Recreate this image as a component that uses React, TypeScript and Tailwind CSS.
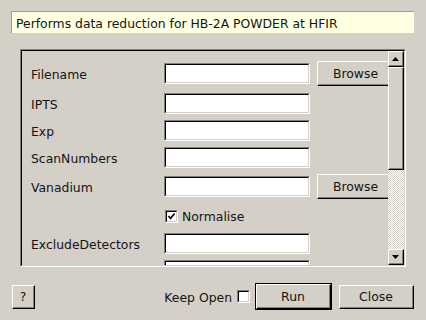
import React from "react";

const Sunken = ({ className = "", children }: { className?: string; children?: React.ReactNode }) => (
  <div className={`border-t border-l border-[#808080] border-b border-r border-b-white border-r-white ${className}`}>
    <div className="w-full h-full border-t border-l border-black border-b border-r border-b-[#d4d0c8] border-r-[#d4d0c8] bg-white">
      {children}
    </div>
  </div>
);

const Raised = ({
  className = "",
  children,
  noRight = false,
}: {
  className?: string;
  children?: React.ReactNode;
  noRight?: boolean;
}) => (
  <div
    className={`border-t border-l border-white border-b border-b-black ${noRight ? "" : "border-r border-r-black"} bg-[#d4d0c8] ${className}`}
  >
    <div
      className={`w-full h-full flex items-center justify-center border-b border-b-[#808080] ${noRight ? "" : "border-r border-r-[#808080]"}`}
    >
      {children}
    </div>
  </div>
);

const Check = ({ checked }: { checked?: boolean }) => (
  <Sunken className="w-[13px] h-[13px] shrink-0">
    {checked && (
      <svg width="9" height="9" viewBox="0 0 9 9" className="block">
        <path d="M1.5 4 L3.5 6.5 L7.5 1.5" stroke="black" strokeWidth="1.6" fill="none" />
      </svg>
    )}
  </Sunken>
);

const Arrow = ({ up }: { up?: boolean }) => (
  <Raised className="w-[16px] h-[16px] shrink-0">
    <svg width="7" height="4" viewBox="0 0 7 4" className="block">
      {up ? <path d="M3.5 0 L7 4 L0 4 Z" fill="black" /> : <path d="M0 0 L7 0 L3.5 4 Z" fill="black" />}
    </svg>
  </Raised>
);

const fields: { label: string; browse?: boolean; check?: boolean }[] = [
  { label: "Filename", browse: true },
  { label: "IPTS" },
  { label: "Exp" },
  { label: "ScanNumbers" },
  { label: "Vanadium", browse: true },
  { label: "", check: true },
  { label: "ExcludeDetectors" },
  { label: "" },
];

export default function App() {
  return (
    <div
      className="w-[426px] h-[320px] bg-[#d4d0c8] text-[#141414] text-[12.4px] leading-[15px] pl-[11px] pr-[12px] pt-[11px] overflow-hidden"
      style={{ fontFamily: '"DejaVu Sans", sans-serif' }}
    >
      <div className="h-[22px] w-[403px] bg-[#ffffe1] border-t border-l border-[#a09c94] flex items-center pl-[4px] pt-px">
        Performs data reduction for HB-2A POWDER at HFIR
      </div>

      <div className="mt-[16px] ml-[9px] w-[386px] h-[218px] border-t border-l border-[#808080] border-b border-r border-b-white border-r-white">
        <div className="w-full h-full border-t border-l border-black border-b border-r border-b-[#d4d0c8] border-r-[#d4d0c8] flex">
          <div className="flex-1 overflow-hidden pt-[10px] pl-[9px]">
            <div className="flex flex-col gap-[7px] w-[400px]">
              {fields.map((f, i) => (
                <div key={i} className={`flex items-center ${f.browse ? "h-[25px]" : "h-[20px]"}`}>
                  <div className="w-[133px] shrink-0 pt-[2px]">{f.label}</div>
                  {f.check ? (
                    <div className="flex items-center gap-[4px] pl-px">
                      <Check checked />
                      <span className="pt-px">Normalise</span>
                    </div>
                  ) : (
                    <Sunken className="w-[146px] h-[21px] shrink-0" />
                  )}
                  {f.browse && (
                    <Raised className="ml-[7px] w-[76px] h-[25px] shrink-0" noRight>
                      <span className="pt-px">Browse</span>
                    </Raised>
                  )}
                </div>
              ))}
            </div>
          </div>
          <div className="w-[16px] flex flex-col">
            <Arrow up />
            <Raised className="w-[16px] h-[103px] shrink-0" />
            <div className="flex-1 bg-[repeating-conic-gradient(#ffffff_0_25%,#d4d0c8_0_50%)] bg-[length:2px_2px]" />
            <Arrow />
          </div>
        </div>
      </div>

      <div className="mt-[16px] flex items-center">
        <Raised className="ml-px w-[23px] h-[24px]">?</Raised>
        <div className="flex-1" />
        <span className="mr-[5px] pt-px">Keep Open</span>
        <Check />
        <div className="ml-[5px] border border-black">
          <Raised className="w-[75px] h-[25px]">
            <span className="pt-px">Run</span>
          </Raised>
        </div>
        <Raised className="ml-[7px] w-[75px] h-[24px]">
          <span className="pt-px">Close</span>
        </Raised>
      </div>
    </div>
  );
}
